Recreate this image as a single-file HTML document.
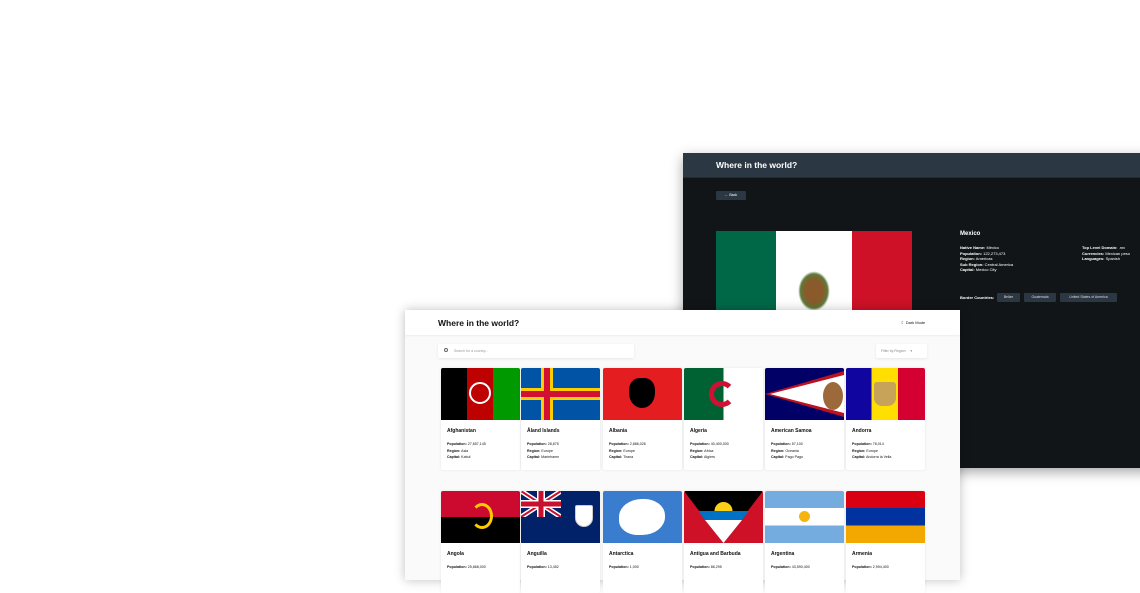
<!DOCTYPE html>
<html><head><meta charset="utf-8"><style>
*{margin:0;padding:0;box-sizing:border-box}
body{width:1140px;height:570px;background:#fff;position:relative;overflow:hidden;font-family:"Liberation Sans",sans-serif}
.dark{position:absolute;left:683px;top:153px;width:470px;height:315px;background:#121517;box-shadow:0 4px 12px rgba(0,0,0,.35)}
.dh{height:25px;background:#2b3743;border-bottom:1px solid #222a33;color:#fff;font-weight:bold;font-size:8.5px;padding:7px 0 0 33px}
.back{position:absolute;left:33px;top:38px;width:30px;height:9px;background:#2b3743;color:#fff;font-size:3.5px;text-align:center;line-height:9px;border-radius:1px}
.mex{position:absolute;left:33px;top:78px;width:196px;height:90px;display:flex}
.dt{position:absolute;color:#fff;font-size:4px;line-height:5.5px}
.dt b{font-weight:bold}
.bc{position:absolute;top:140px;height:9px;background:#2b3743;color:#ddd;font-size:3.5px;line-height:9px;text-align:center;border-radius:1px}
.light{position:absolute;left:405px;top:310px;width:555px;height:270px;background:#fafafa;box-shadow:0 0 10px rgba(0,0,0,.25)}
.lh{height:25px;background:#fff;box-shadow:0 1px 2px rgba(0,0,0,.06);position:relative}
.lh .t{position:absolute;left:33px;top:8px;font-weight:bold;font-size:8.5px;color:#111}
.lh .dm{position:absolute;left:496px;top:10px;font-size:4px;color:#111}
.search{position:absolute;left:33px;top:34px;width:196px;height:14px;background:#fff;box-shadow:0 1px 3px rgba(0,0,0,.08);border-radius:2px;font-size:3.5px;color:#999;padding:5px 0 0 16px}
.filter{position:absolute;left:471px;top:34px;width:51px;height:14px;background:#fff;box-shadow:0 1px 3px rgba(0,0,0,.08);border-radius:2px;font-size:3.5px;color:#888;padding:5px 0 0 5px}
.card{position:absolute;width:79px;height:102px;background:#fff;border-radius:2px;box-shadow:0 0 3px rgba(0,0,0,.08);overflow:hidden}
.fl{height:52px;position:relative;overflow:hidden}
.nm{font-weight:bold;font-size:5px;color:#111;margin:8px 0 0 6px}
.inf{font-size:3.6px;color:#111;margin:7px 0 0 6px;line-height:6.5px}
.inf b{font-weight:bold}
</style></head><body>
<div class="dark">
<div class="dh">Where in the world?</div>
<div class="back">← Back</div>
<div class="mex"><div style="width:60px;background:#006847"></div><div style="width:76px;background:#fff;position:relative"><div style="position:absolute;left:22px;top:40px;width:32px;height:40px;border-radius:50%;background:radial-gradient(#8a5a2b 40%,#5d7a3a 60%,transparent 70%)"></div></div><div style="width:60px;background:#ce1126"></div></div>
<div class="dt" style="left:277px;top:79px;font-size:6px;font-weight:bold">Mexico</div>
<div class="dt" style="left:277px;top:92px"><b>Native Name:</b> México<br><b>Population:</b> 122,273,473<br><b>Region:</b> Americas<br><b>Sub Region:</b> Central America<br><b>Capital:</b> Mexico City</div>
<div class="dt" style="left:399px;top:92px"><b>Top Level Domain:</b> .mx<br><b>Currencies:</b> Mexican peso<br><b>Languages:</b> Spanish</div>
<div class="dt" style="left:277px;top:142px"><b>Border Countries:</b></div>
<div class="bc" style="left:314px;width:23px">Belize</div>
<div class="bc" style="left:341px;width:32px">Guatemala</div>
<div class="bc" style="left:377px;width:57px">United States of America</div>
</div>
<div class="light">
<div class="lh"><div class="t">Where in the world?</div><div class="dm">☾ Dark Mode</div></div>
<div class="search">Search for a country...</div>
<div style="position:absolute;left:39px;top:38px;width:4px;height:4px;border:1px solid #666;border-radius:50%"></div>
<div class="filter">Filter by Region &nbsp;&nbsp;&nbsp;&nbsp;▾</div>

<div class="card" style="left:36px;top:58px"><div class="fl" style="background:linear-gradient(90deg,#000 33%,#be0000 33% 66%,#009900 66%)"><div style="position:absolute;left:28px;top:14px;width:22px;height:22px;border-radius:50%;border:2px solid #fff"></div></div><div class="nm">Afghanistan</div><div class="inf"><b>Population:</b> 27,657,145<br><b>Region:</b> Asia<br><b>Capital:</b> Kabul</div></div>
<div class="card" style="left:116px;top:58px"><div class="fl" style="background:#0053a5"><div style="position:absolute;left:20px;top:0;width:12px;height:52px;background:#ffce00"></div><div style="position:absolute;left:0;top:20px;width:79px;height:12px;background:#ffce00"></div><div style="position:absolute;left:23px;top:0;width:6px;height:52px;background:#d21034"></div><div style="position:absolute;left:0;top:23px;width:79px;height:6px;background:#d21034"></div></div><div class="nm">Åland Islands</div><div class="inf"><b>Population:</b> 28,875<br><b>Region:</b> Europe<br><b>Capital:</b> Mariehamn</div></div>
<div class="card" style="left:198px;top:58px"><div class="fl" style="background:#e41e20"><div style="position:absolute;left:26px;top:10px;width:26px;height:30px;background:#000;border-radius:40% 40% 50% 50%"></div></div><div class="nm">Albania</div><div class="inf"><b>Population:</b> 2,886,026<br><b>Region:</b> Europe<br><b>Capital:</b> Tirana</div></div>
<div class="card" style="left:279px;top:58px"><div class="fl" style="background:linear-gradient(90deg,#006233 50%,#fff 50%)"><div style="position:absolute;left:25px;top:13px;width:26px;height:26px;border-radius:50%;border:5px solid #d21034;border-right-color:transparent"></div></div><div class="nm">Algeria</div><div class="inf"><b>Population:</b> 40,400,000<br><b>Region:</b> Africa<br><b>Capital:</b> Algiers</div></div>
<div class="card" style="left:360px;top:58px"><div class="fl" style="background:#000066"><svg width="79" height="52" style="position:absolute"><polygon points="0,26 79,3 79,49" fill="#bd1021"/><polygon points="5,26 79,7 79,45" fill="#fff"/><ellipse cx="68" cy="28" rx="10" ry="14" fill="#9c6a3a"/></svg></div><div class="nm">American Samoa</div><div class="inf"><b>Population:</b> 57,100<br><b>Region:</b> Oceania<br><b>Capital:</b> Pago Pago</div></div>
<div class="card" style="left:441px;top:58px"><div class="fl" style="background:linear-gradient(90deg,#10069f 32%,#fedf00 32% 66%,#d50032 66%)"><div style="position:absolute;left:28px;top:14px;width:22px;height:24px;background:#c7a35a;border-radius:3px 3px 8px 8px"></div></div><div class="nm">Andorra</div><div class="inf"><b>Population:</b> 78,014<br><b>Region:</b> Europe<br><b>Capital:</b> Andorra la Vella</div></div>

<div class="card" style="left:36px;top:181px"><div class="fl" style="background:linear-gradient(#cc092f 50%,#000 50%)"><div style="position:absolute;left:30px;top:12px;width:22px;height:26px;border-radius:50%;border:3px solid #ffcb00;border-left-color:transparent"></div></div><div class="nm">Angola</div><div class="inf"><b>Population:</b> 25,868,000</div></div>
<div class="card" style="left:116px;top:181px"><div class="fl" style="background:#012169"><svg width="40" height="26" style="position:absolute"><path d="M0 0L40 26M40 0L0 26" stroke="#fff" stroke-width="5"/><path d="M0 0L40 26M40 0L0 26" stroke="#c8102e" stroke-width="2"/><path d="M20 0V26M0 13H40" stroke="#fff" stroke-width="8"/><path d="M20 0V26M0 13H40" stroke="#c8102e" stroke-width="5"/></svg><div style="position:absolute;left:54px;top:14px;width:18px;height:22px;background:#fff;border:1px solid #ccc;border-radius:2px 2px 9px 9px"></div></div><div class="nm">Anguilla</div><div class="inf"><b>Population:</b> 13,452</div></div>
<div class="card" style="left:198px;top:181px"><div class="fl" style="background:#3a7dce"><div style="position:absolute;left:16px;top:8px;width:46px;height:36px;background:#fff;border-radius:50% 45% 50% 40%"></div></div><div class="nm">Antarctica</div><div class="inf"><b>Population:</b> 1,000</div></div>
<div class="card" style="left:279px;top:181px"><div class="fl" style="background:#ce1126"><svg width="79" height="52" style="position:absolute"><polygon points="0,0 79,0 39.5,52" fill="#000"/><polygon points="12,18 67,18 58,30 21,30" fill="#fcd116" opacity="0"/><circle cx="39.5" cy="20" r="9" fill="#fcd116"/><polygon points="14,20 65,20 39.5,52" fill="#0072c6"/><polygon points="21,29 58,29 39.5,52" fill="#fff"/></svg></div><div class="nm">Antigua and Barbuda</div><div class="inf"><b>Population:</b> 86,295</div></div>
<div class="card" style="left:360px;top:181px"><div class="fl" style="background:linear-gradient(#74acdf 33%,#fff 33% 66%,#74acdf 66%)"><div style="position:absolute;left:34px;top:20px;width:11px;height:11px;border-radius:50%;background:#f6b40e"></div></div><div class="nm">Argentina</div><div class="inf"><b>Population:</b> 43,590,400</div></div>
<div class="card" style="left:441px;top:181px"><div class="fl" style="background:linear-gradient(#d90012 33%,#0033a0 33% 66%,#f2a800 66%)"></div><div class="nm">Armenia</div><div class="inf"><b>Population:</b> 2,994,400</div></div>
</div>
</body></html>
